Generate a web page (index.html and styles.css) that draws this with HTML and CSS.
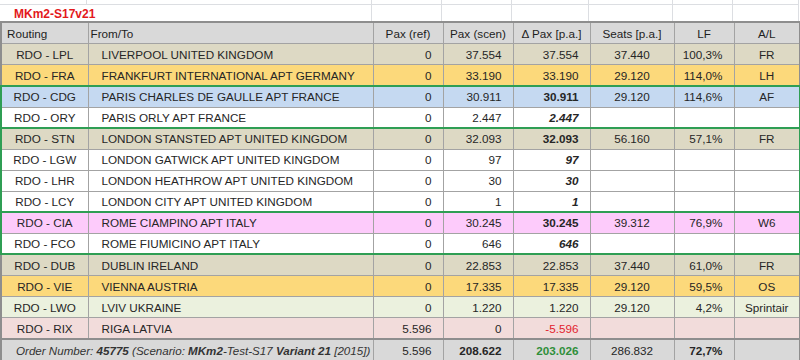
FILE: index.html
```html
<!DOCTYPE html>
<html>
<head>
<meta charset="utf-8">
<link rel="stylesheet" href="styles.css">
</head>
<body>
<div class="sheet-top">
  <div class="gap c1"></div><div class="gap"></div><div class="gap"></div><div class="gap"></div><div class="gap"></div><div class="gap"></div><div class="gap"></div><div class="gap"></div>
  <div class="title">MKm2-S17v21</div><div class="tc"></div><div class="tc"></div><div class="tc"></div><div class="tc"></div><div class="tc"></div><div class="tc"></div>
</div>
<table class="grid">
  <colgroup>
    <col class="w-route"><col class="w-name"><col class="w-ref"><col class="w-scen"><col class="w-delta"><col class="w-seats"><col class="w-lf"><col class="w-al">
  </colgroup>
  <thead>
    <tr class="head">
      <th class="h-left h-route">Routing</th>
      <th class="h-left h-name">From/To</th>
      <th>Pax (ref)</th>
      <th>Pax (scen)</th>
      <th>Δ Pax [p.a.]</th>
      <th>Seats [p.a.]</th>
      <th>LF</th>
      <th>A/L</th>
    </tr>
  </thead>
  <tbody>
    <tr class="tan"><td class="route">RDO - LPL</td><td class="name">LIVERPOOL UNITED KINGDOM</td><td class="num">0</td><td class="num">37.554</td><td class="num">37.554</td><td class="ctr">37.440</td><td class="num">100,3%</td><td class="ctr">FR</td></tr>
    <tr class="gold"><td class="route">RDO - FRA</td><td class="name">FRANKFURT INTERNATIONAL APT GERMANY</td><td class="num">0</td><td class="num">33.190</td><td class="num">33.190</td><td class="ctr">29.120</td><td class="num">114,0%</td><td class="ctr">LH</td></tr>
  </tbody>
  <tbody class="group">
    <tr class="blue"><td class="route">RDO - CDG</td><td class="name">PARIS CHARLES DE GAULLE APT FRANCE</td><td class="num">0</td><td class="num">30.911</td><td class="num b">30.911</td><td class="ctr">29.120</td><td class="num">114,6%</td><td class="ctr">AF</td></tr>
    <tr class="white"><td class="route">RDO - ORY</td><td class="name">PARIS ORLY APT FRANCE</td><td class="num">0</td><td class="num">2.447</td><td class="num bi">2.447</td><td></td><td></td><td></td></tr>
  </tbody>
  <tbody class="group">
    <tr class="tan"><td class="route">RDO - STN</td><td class="name">LONDON STANSTED APT UNITED KINGDOM</td><td class="num">0</td><td class="num">32.093</td><td class="num b">32.093</td><td class="ctr">56.160</td><td class="num">57,1%</td><td class="ctr">FR</td></tr>
    <tr class="white"><td class="route">RDO - LGW</td><td class="name">LONDON GATWICK APT UNITED KINGDOM</td><td class="num">0</td><td class="num">97</td><td class="num bi">97</td><td></td><td></td><td></td></tr>
    <tr class="white"><td class="route">RDO - LHR</td><td class="name">LONDON HEATHROW APT UNITED KINGDOM</td><td class="num">0</td><td class="num">30</td><td class="num bi">30</td><td></td><td></td><td></td></tr>
    <tr class="white"><td class="route">RDO - LCY</td><td class="name">LONDON CITY APT UNITED KINGDOM</td><td class="num">0</td><td class="num">1</td><td class="num bi">1</td><td></td><td></td><td></td></tr>
  </tbody>
  <tbody class="group">
    <tr class="pink"><td class="route">RDO - CIA</td><td class="name">ROME CIAMPINO APT ITALY</td><td class="num">0</td><td class="num">30.245</td><td class="num b">30.245</td><td class="ctr">39.312</td><td class="num">76,9%</td><td class="ctr">W6</td></tr>
    <tr class="white"><td class="route">RDO - FCO</td><td class="name">ROME FIUMICINO APT ITALY</td><td class="num">0</td><td class="num">646</td><td class="num bi">646</td><td></td><td></td><td></td></tr>
  </tbody>
  <tbody>
    <tr class="tan"><td class="route">RDO - DUB</td><td class="name">DUBLIN IRELAND</td><td class="num">0</td><td class="num">22.853</td><td class="num">22.853</td><td class="ctr">37.440</td><td class="num">61,0%</td><td class="ctr">FR</td></tr>
    <tr class="gold"><td class="route">RDO - VIE</td><td class="name">VIENNA AUSTRIA</td><td class="num">0</td><td class="num">17.335</td><td class="num">17.335</td><td class="ctr">29.120</td><td class="num">59,5%</td><td class="ctr">OS</td></tr>
    <tr class="green"><td class="route">RDO - LWO</td><td class="name">LVIV UKRAINE</td><td class="num">0</td><td class="num">1.220</td><td class="num">1.220</td><td class="ctr">29.120</td><td class="num">4,2%</td><td class="ctr">Sprintair</td></tr>
    <tr class="rose"><td class="route">RDO - RIX</td><td class="name">RIGA LATVIA</td><td class="num">5.596</td><td class="num">0</td><td class="num neg">-5.596</td><td></td><td></td><td></td></tr>
  </tbody>
  <tfoot>
    <tr class="foot">
      <td colspan="2" class="order">Order Number: <b>45775</b> (Scenario: <b>MKm2</b>-Test-S17 <b>Variant 21</b> [2015])</td>
      <td class="num">5.596</td>
      <td class="num b">208.622</td>
      <td class="num b pos">203.026</td>
      <td class="ctr">286.832</td>
      <td class="num b">72,7%</td>
      <td></td>
    </tr>
  </tfoot>
</table>
</body>
</html>
```
FILE: styles.css
```css
html, body {
  margin: 0;
  padding: 0;
  background: #ffffff;
}
body {
  font-family: "Liberation Sans", Arial, sans-serif;
  font-size: 11.7px;
  color: #262626;
}
.sheet-top {
  display: grid;
  grid-template-columns: 87px 285px 70px 70px 77px 84px 60px 66px;
  grid-template-rows: 5px 16px;
  width: 799px;
}
.gap {
  border-right: 1px solid #dcdee2;
  border-bottom: 1px solid #dcdee2;
}
.tc {
  border-right: 1px solid #dcdee2;
}
.title {
  grid-column: 1 / span 2;
  border-right: 1px solid #dcdee2;
  color: #e3191c;
  font-weight: bold;
  font-size: 12px;
  padding-left: 14px;
  line-height: 18px;
}
.grid {
  border-collapse: collapse;
  table-layout: fixed;
  width: 799px;
  border: 2px solid #8e8e8e;
}
.w-route { width: 87px; }
.w-name { width: 285px; }
.w-ref { width: 70px; }
.w-scen { width: 70px; }
.w-delta { width: 77px; }
.w-seats { width: 84px; }
.w-lf { width: 60px; }
.w-al { width: 66px; }
.grid th, .grid td {
  border: 1px solid #a3a3a3;
  height: 20px;
  padding: 0;
  white-space: nowrap;
  overflow: hidden;
  font-weight: normal;
}
.grid .head th {
  background: #d9d9d9;
  color: #1e1e1e;
  text-align: center;
  height: 20px;
}
.grid .head .h-left { text-align: left; }
.grid .h-route { padding-left: 5px; }
.grid .h-name { padding-left: 2px; }
.grid .route { text-align: center; }
.grid .name { padding-left: 13px; }
.grid .num { text-align: right; padding-right: 11px; }
.grid .ctr { text-align: center; }
.grid .b { font-weight: bold; }
.grid .bi { font-weight: bold; font-style: italic; }
.grid .neg { color: #e2222d; }
.grid .pos { color: #2f8f3a; }
.group { border: 2px solid #2f9e54; }
.grid .group tr:first-child td,
.grid .group tr:last-child td { height: 19.5px; }
.tan td { background: #ddd9c4; }
.gold td { background: #fcd97b; }
.blue td { background: #c5d9f1; }
.white td { background: #ffffff; }
.pink td { background: #fdcbfb; }
.green td { background: #ebf1de; }
.rose td { background: #f2dcdb; }
.grid .foot td {
  background: #d9d9d9;
  border-top: 2px solid #8e8e8e;
  height: 20px;
}
.grid .foot .order {
  font-style: italic;
  font-size: 11.6px;
  color: #333333;
  padding-left: 14px;
}
.foot .order b { font-weight: bold; }
```
